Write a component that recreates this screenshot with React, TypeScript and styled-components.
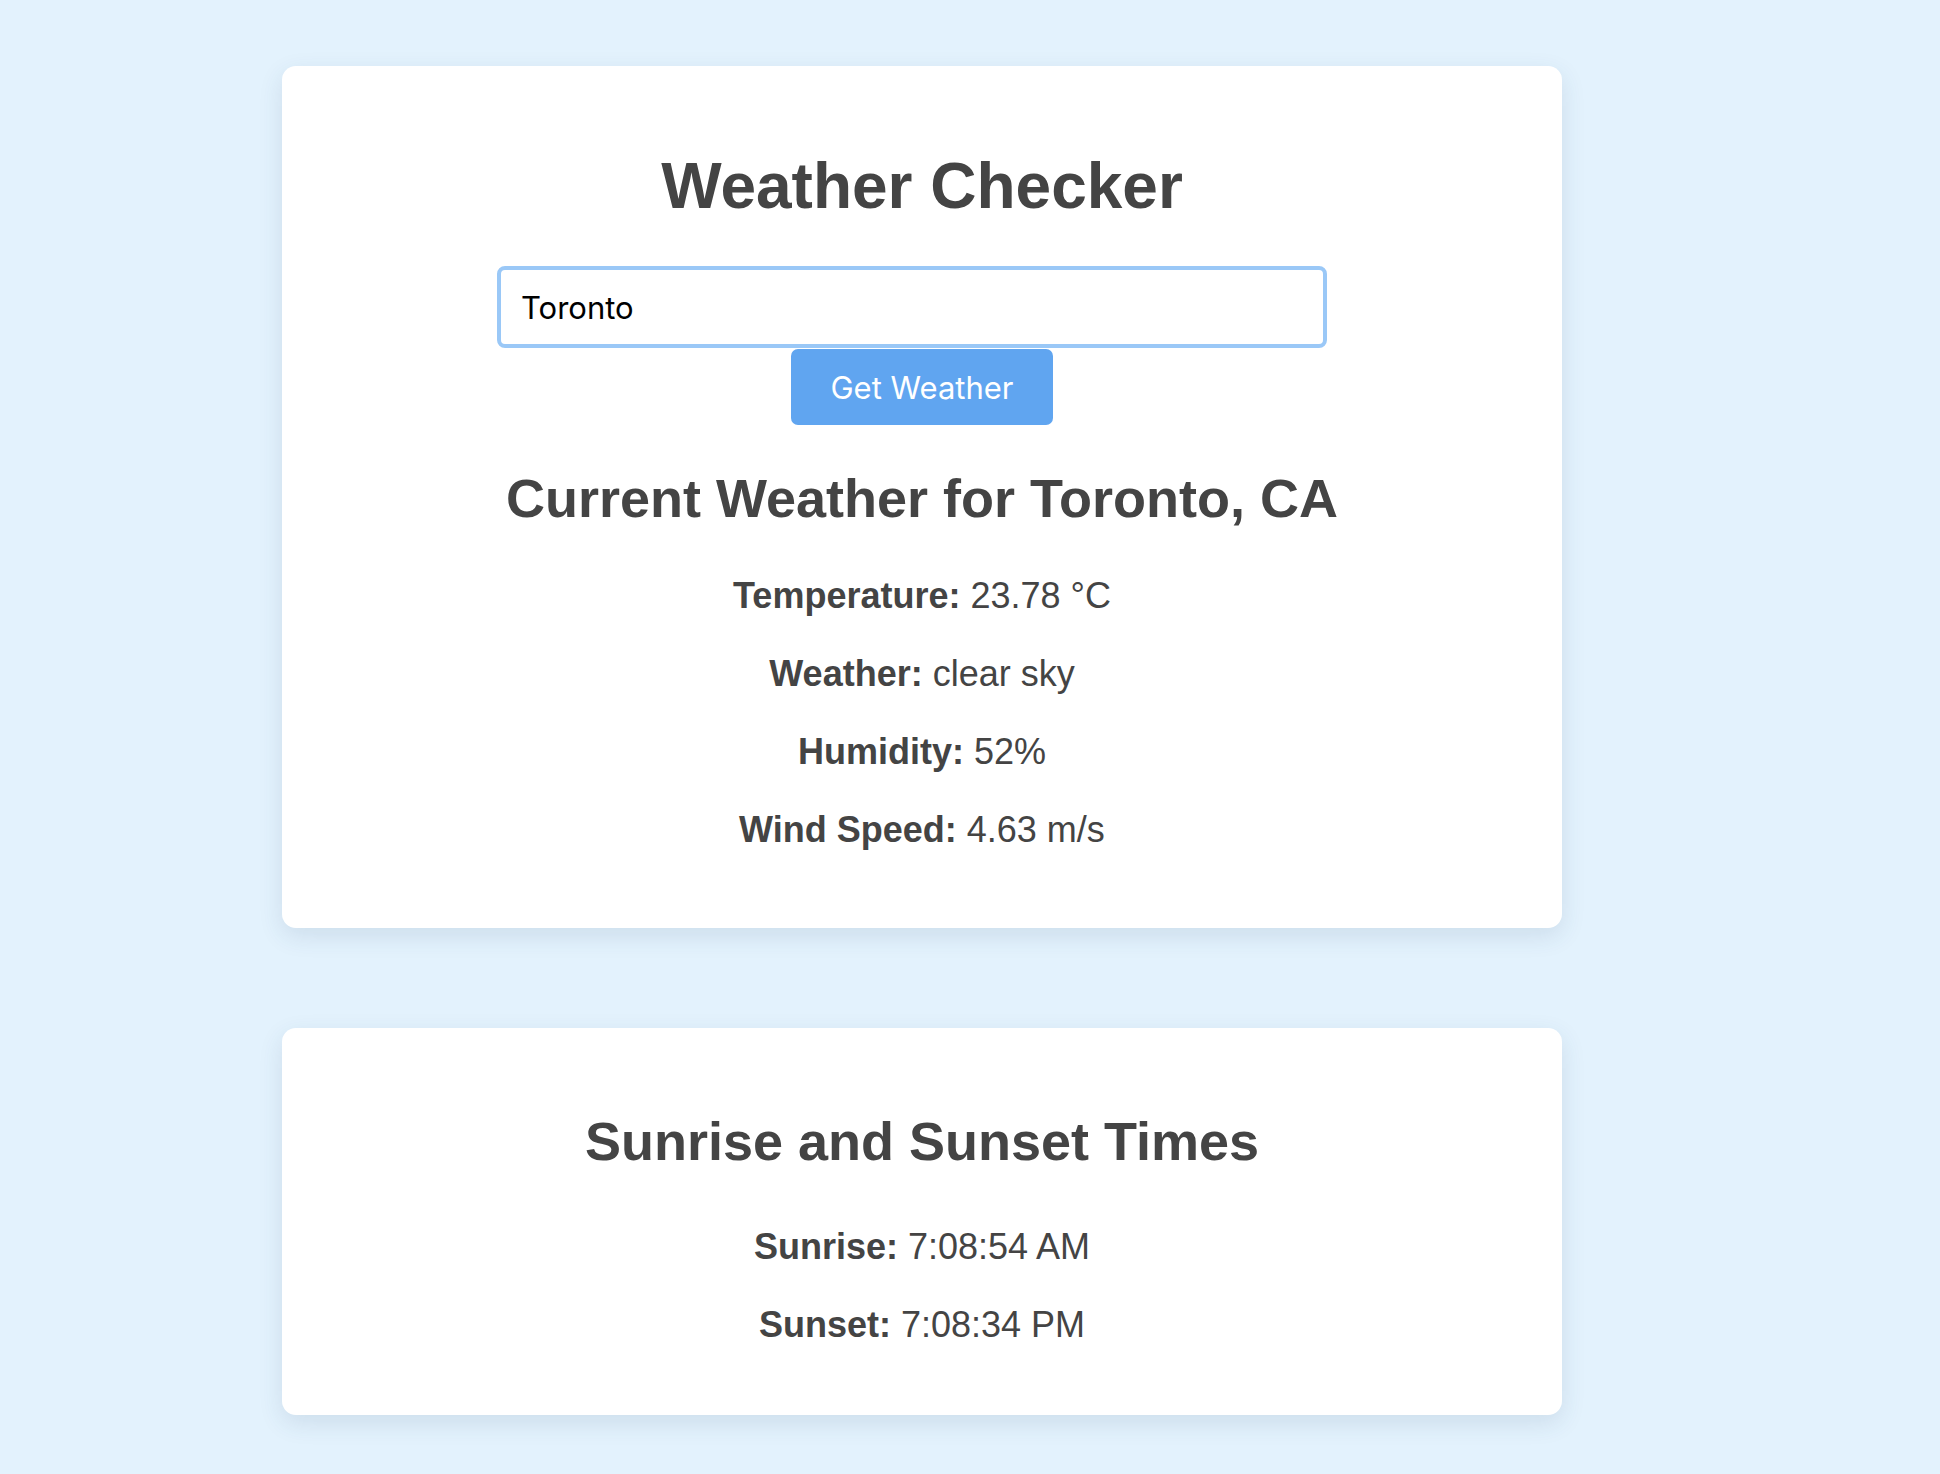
import React, { useState } from 'react';
import styled, { createGlobalStyle } from 'styled-components';

const GlobalStyle = createGlobalStyle`
  html, body {
    margin: 0;
    padding: 0;
    background: #e3f2fd;
  }

  body {
    font-family: "Liberation Sans", Arial, Helvetica, sans-serif;
    color: #444;
  }
`;

const Page = styled.div`
  display: flex;
  flex-direction: column;
  gap: 100px;
  min-height: 1474px;
  box-sizing: border-box;
  padding: 66px 0 61px 282px;
`;

const Card = styled.section`
  display: flex;
  flex-direction: column;
  align-items: center;
  width: 1280px;
  box-sizing: border-box;
  padding: 40px 40px 41px;
  background: #fff;
  border-radius: 14px;
  box-shadow: 0 8px 24px rgba(40, 70, 110, 0.12);
  text-align: center;
`;

const Title = styled.h1`
  margin: 43px 0;
  font-size: 64px;
  line-height: 74px;
  font-weight: 700;
`;

const SearchInput = styled.input`
  width: 830px;
  height: 82px;
  box-sizing: border-box;
  margin-right: 20px;
  padding: 0 20px;
  border: 4px solid #9ac8f7;
  border-radius: 8px;
  outline: none;
  font-family: Inter, "Noto Sans", sans-serif;
  font-size: 31px;
  color: #000;
  background: #fff;
`;

const Button = styled.button`
  width: 262px;
  height: 76px;
  margin-top: 1px;
  border: none;
  border-radius: 7px;
  background: #60a5f0;
  color: #fff;
  font-family: Inter, "Noto Sans", sans-serif;
  font-size: 31px;
  cursor: pointer;
`;

const Heading = styled.h2`
  margin: 42px 0 46px;
  font-size: 54px;
  line-height: 62px;
  font-weight: 700;
`;

// $shift pushes the rows down without growing the card
const StatList = styled.div<{ $shift?: number }>`
  display: flex;
  flex-direction: column;
  align-items: center;
  margin-top: ${p => p.$shift ?? 0}px;
  margin-bottom: ${p => -(p.$shift ?? 0)}px;
`;

const Stat = styled.p`
  margin: 0 0 37px;
  font-size: 36px;
  line-height: 41px;

  strong {
    font-weight: 700;
  }
`;

const stats = [
  { label: 'Temperature:', value: '23.78 °C' },
  { label: 'Weather:', value: 'clear sky' },
  { label: 'Humidity:', value: '52%' },
  { label: 'Wind Speed:', value: '4.63 m/s' },
];

const sunTimes = [
  { label: 'Sunrise:', value: '7:08:54 AM' },
  { label: 'Sunset:', value: '7:08:34 PM' },
];

const App = () => {
  const [city, setCity] = useState('Toronto');

  return (
    <>
      <GlobalStyle />
      <Page>

        <Card>
          <Title>Weather Checker</Title>
          <SearchInput value={city} onChange={e => setCity(e.target.value)} />
          <Button>Get Weather</Button>
          <Heading>Current Weather for Toronto, CA</Heading>
          <StatList>
            {stats.map(stat => (
              <Stat key={stat.label}><strong>{stat.label}</strong> {stat.value}</Stat>
            ))}
          </StatList>
        </Card>

        <Card>
          <Heading>Sunrise and Sunset Times</Heading>
          <StatList $shift={8}>
            {sunTimes.map(time => (
              <Stat key={time.label}><strong>{time.label}</strong> {time.value}</Stat>
            ))}
          </StatList>
        </Card>

      </Page>
    </>
  );
}

export default App;
